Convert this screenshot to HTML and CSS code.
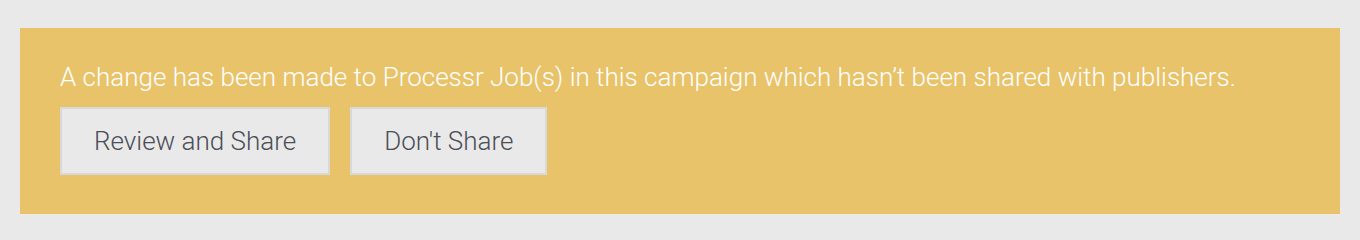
FILE: index.html
```html
<!DOCTYPE html>
<html>
<head>
<meta charset="utf-8">
<link rel="stylesheet" href="styles.css">
</head>
<body>
<div class="banner">
  <p class="message">A change has been made to Processr Job(s) in this campaign which hasn’t been shared with publishers.</p>
  <div class="actions">
    <button class="btn">Review and Share</button>
    <button class="btn">Don't Share</button>
  </div>
</div>
</body>
</html>
```
FILE: styles.css
```css
html, body {
  margin: 0;
  padding: 0;
  background: #e9e9e9;
}
body {
  padding: 28px 20px;
  font-family: Roboto, "Liberation Sans", sans-serif;
}
.banner {
  background: #e8c36a;
  padding: 34px 40px 0 40px;
  height: 186px;
  box-sizing: border-box;
}
.message {
  margin: 0 0 15px 0;
  color: #ffffff;
  font-size: 26px;
  font-weight: 300;
  line-height: 30px;
}
.actions {
  display: flex;
  gap: 20px;
}
.btn {
  height: 68px;
  box-sizing: border-box;
  padding: 0 32px;
  background: #e9e9e9;
  border: 2px solid #d9d9d9;
  border-radius: 0;
  color: #4b4e56;
  font-family: Roboto, "Liberation Sans", sans-serif;
  font-size: 26px;
  font-weight: 300;
}
```
